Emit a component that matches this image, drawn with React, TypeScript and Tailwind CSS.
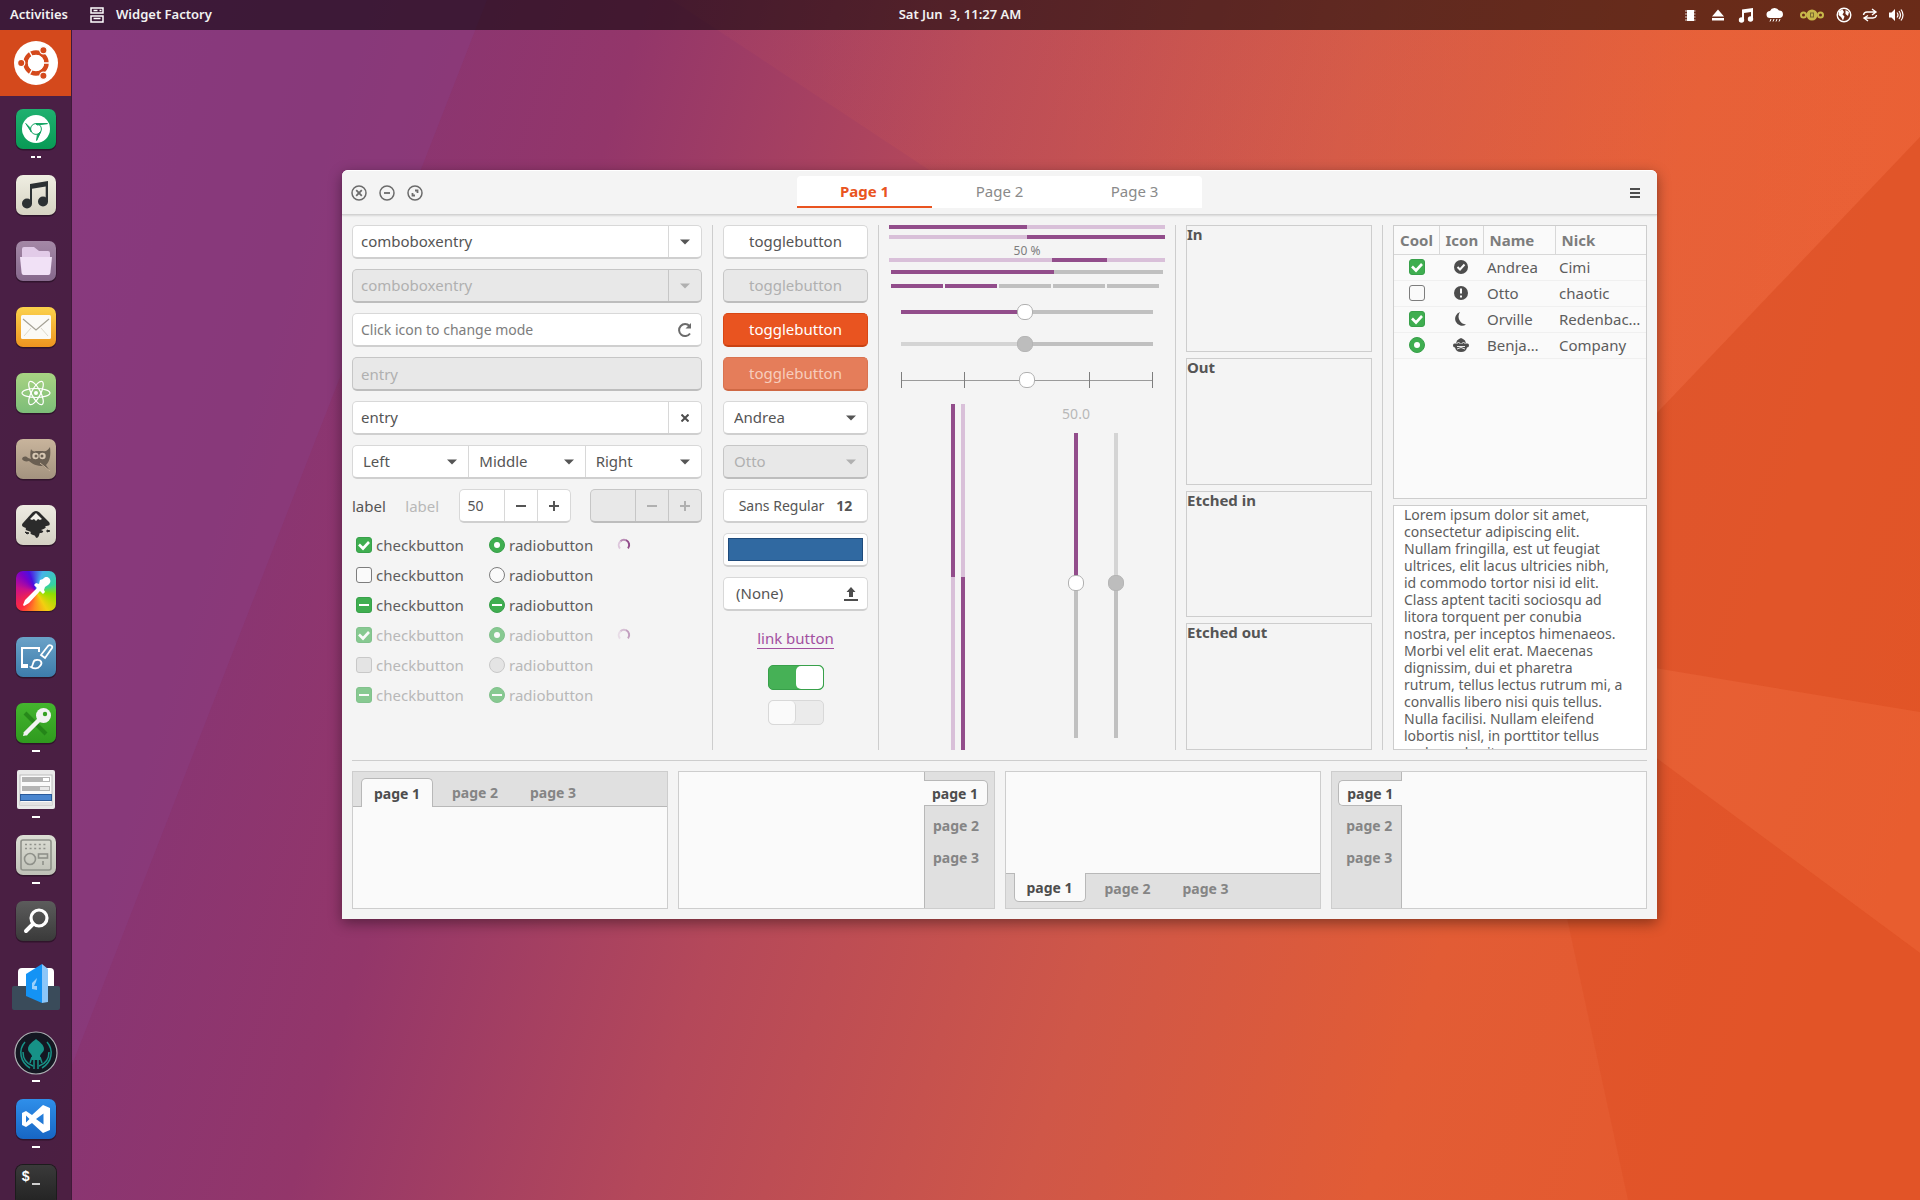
import type { ReactNode } from 'react'
import clsx from 'clsx'

interface DockItem {
  name: string
  windows: number
  icon: ReactNode
}

interface Person {
  state: 'on' | 'off' | 'radio'
  icon: ReactNode
  name: string
  nick: string
}

const Tile = ({ from, to, children }: { from: string; to: string; children: ReactNode }) => (
  <svg viewBox="0 0 40 40" className="size-10 overflow-visible">
    <defs>
      <linearGradient id={`tile-${from.slice(1)}`} x1="0" y1="0" x2="0" y2="1">
        <stop offset="0" stopColor={from} />
        <stop offset="1" stopColor={to} />
      </linearGradient>
    </defs>
    <rect x="-0.5" y="0.5" width="41" height="41" rx="7.5" fill="#000" opacity="0.35" />
    <rect width="40" height="40" rx="7" fill={`url(#tile-${from.slice(1)})`} />
    {children}
  </svg>
)

const dock: DockItem[] = [
  {
    name: 'Chromium',
    windows: 2,
    icon: (
      <Tile from="#1fb070" to="#089a55">
        <circle cx="20" cy="20" r="14" fill="#fff" />
        <circle cx="20" cy="20" r="5.4" fill="none" stroke="#12a362" strokeWidth="1" />
        <path d="M20 14.6h11.5L21 16zM15.2 22.8L9.800 14.5l4 4zM24.800 22.8L20.600 31.5l.8-6z" fill="#12a362" stroke="#12a362" />
      </Tile>
    )
  },
  {
    name: 'Music',
    windows: 0,
    icon: (
      <Tile from="#efeee2" to="#d6d3c3">
        <g fill="#2c3133">
          <circle cx="11" cy="28.5" r="5" />
          <circle cx="27" cy="26.5" r="5" />
          <path d="M14 9l18-3v21h-2.3V11.5L16 13.8V29h-2z" />
        </g>
      </Tile>
    )
  },
  {
    name: 'Files',
    windows: 0,
    icon: (
      <Tile from="#a488a6" to="#86688c">
        <path d="M6 8q0-2 2-2h10l5 4h9q2 0 2 2v6H6z" fill="#e2cbe8" />
        <path d="M4 16h32l-1.6 16q-.3 2-2 2H7.600q-1.700 0-2-2z" fill="#f1e1f6" />
      </Tile>
    )
  },
  {
    name: 'Mail',
    windows: 0,
    icon: (
      <Tile from="#fbd24c" to="#ee9420">
        <rect x="5" y="8" width="30" height="24" rx="1.500" fill="#fbfaf6" />
        <path d="M7 12l13 11L33 12" fill="none" stroke="#a5a295" strokeWidth="1.200" />
        <path d="M8 29l7-8M32 29l-7-8" stroke="#dcd9cc" strokeWidth="1" />
      </Tile>
    )
  },
  {
    name: 'Atom',
    windows: 0,
    icon: (
      <Tile from="#a8d383" to="#7cbd78">
        <g fill="none" stroke="#fff" strokeWidth="1.200">
          <ellipse cx="20" cy="20" rx="14" ry="4.500" />
          <ellipse cx="20" cy="20" rx="13" ry="4.500" transform="rotate(62 20 20)" />
          <ellipse cx="20" cy="20" rx="13" ry="4.500" transform="rotate(118 20 20)" />
        </g>
        <circle cx="20" cy="20" r="2" fill="#fff" />
      </Tile>
    )
  },
  {
    name: 'GIMP',
    windows: 0,
    icon: (
      <Tile from="#c8b49c" to="#a3937f">
        <path
          d="M15 10c1 2 3 3 5 2h7c3 1 5-1 7-4 1 8 0 14-4 18l4 6-7-5c-6 0-11-2-14-5-3 1-6 0-7-2 1-3 4-3 6-1l3 1c-1-3-1-6 0-10z"
          fill="#6a5f52"
        />
        <circle cx="19.500" cy="17" r="3.200" fill="#d8c9b4" />
        <circle cx="26.500" cy="17" r="3.200" fill="#d8c9b4" />
        <circle cx="20" cy="17" r="1.500" fill="#6a5f52" />
        <circle cx="26" cy="17" r="1.500" fill="#6a5f52" />
        <path d="M24 24l10 8" stroke="#c8b49c" strokeWidth="1" />
      </Tile>
    )
  },
  {
    name: 'Inkscape',
    windows: 0,
    icon: (
      <Tile from="#eeebe2" to="#d4d0c4">
        <path
          d="M20 6c2 0 3 1 4 2l9 9c2 3 0 4-4 4 2 1 0 3-4 4 4 1 2 3-1 3-1 0 0 3-3 5-2 0-1-3-4-3-3-1-3-2-2-3-5-2-6-2-5-4-4-1-5-3-3-5l9-10c1-1 2-2 4-2z"
          fill="#2b2b2b"
        />
        <path d="M20 8l6 6-2 1-2-1-2 2-2-2-2 1-2-1z" fill="#f3f1ea" />
        <path d="M9 27l4 1-2 1zM31 25l3 1-3 1z" fill="#2b2b2b" stroke="#2b2b2b" />
      </Tile>
    )
  },
  {
    name: 'Color Picker',
    windows: 0,
    icon: (
      <div className="grid size-10 place-items-center rounded-[7px] bg-[conic-gradient(from_20deg,#45b5e8,#35d3a0_50deg,#8ee000_80deg,#f2d010_130deg,#ff8a20_165deg,#ff2a3c_200deg,#c8108c_260deg,#7a00c8_300deg,#4a10e0_320deg,#45b5e8)] shadow-[0_1px_1px_rgba(0,0,0,0.4)]">
        <svg viewBox="0 0 40 40" className="size-10">
          <path
            d="M24 9l3-1c2-3 5-2 6-1 2 2 2 5-1 7l-3 2-1 3 1 2-2 2-3-3-11 12-5 3-1-1 2-5 12-12-3-3 2-2 3 1z"
            fill="#fff"
          />
        </svg>
      </div>
    )
  },
  {
    name: 'Krita',
    windows: 0,
    icon: (
      <Tile from="#6aa2c8" to="#3d7cab">
        <path d="M23 15v-4H6v19h6" fill="none" stroke="#fff" strokeWidth="2" />
        <path d="M5 27h7v4H5z" fill="#fff" />
        <path d="M25 18l7-9c2-2 5 0 4 2l-7 10zM15 30c3-1 1-7 5-7 5-1 7 3 4 6-2 3-6 3-9 1z" fill="none" stroke="#fff" strokeWidth="1.800" />
      </Tile>
    )
  },
  {
    name: 'Passwords',
    windows: 1,
    icon: (
      <Tile from="#44b52e" to="#2f9a1e">
        <path d="M9 10l21 21" stroke="#1e7a14" strokeWidth="4" opacity=".7" />
        <path d="M24 16L9 31" stroke="#f2f2f2" strokeWidth="4.500" />
        <circle cx="27.500" cy="12.500" r="7.500" fill="#f2f2f2" />
        <circle cx="29" cy="11" r="2.200" fill="#35a022" />
        <path d="M7 33l1-4 4 3z" fill="#f2f2f2" />
      </Tile>
    )
  },
  {
    name: 'Widget Factory',
    windows: 1,
    icon: (
      <svg viewBox="0 0 40 40" className="size-10">
        <rect x="1" y="1" width="38" height="39" rx="2" fill="#e9e9e9" />
        <rect x="4" y="6" width="32" height="30" fill="#fafafa" stroke="#bcbcbc" />
        <rect x="6" y="8" width="28" height="5" fill="#b4b4b4" />
        <rect x="27" y="9" width="6" height="3" fill="#fff" />
        <rect x="6" y="17" width="28" height="5" fill="#b4b4b4" />
        <rect x="24" y="18" width="9" height="3" fill="#e8e8e8" />
        <rect x="4.500" y="25.500" width="31" height="6" fill="#4a86cf" stroke="#2a5a9a" />
        <rect x="4" y="33" width="32" height="3" fill="#e2e2e2" />
      </svg>
    )
  },
  {
    name: 'Tweaks',
    windows: 1,
    icon: (
      <Tile from="#dcddd4" to="#bfc1b7">
        <g fill="none" stroke="#8f918a" strokeWidth="1.600">
          <rect x="5" y="5" width="30" height="30" rx="2" />
          <circle cx="14" cy="24" r="5.500" />
          <rect x="22.500" y="19" width="9" height="4" />
          <path d="M9 9.500h22M9 13.500h22" strokeDasharray="2 2.600" />
          <path d="M27 26v4" />
        </g>
      </Tile>
    )
  },
  {
    name: 'Search',
    windows: 0,
    icon: (
      <Tile from="#5c5c5c" to="#3a3a3a">
        <circle cx="23" cy="17" r="8" fill="none" stroke="#fff" strokeWidth="3.200" />
        <path d="M17 23l-7 7" stroke="#fff" strokeWidth="4" strokeLinecap="round" />
      </Tile>
    )
  },
  {
    name: 'Brackets',
    windows: 0,
    icon: (
      <svg viewBox="0 0 48 48" className="size-12">
        <rect x="6" y="5" width="36" height="22" rx="4" fill="#fff" />
        <rect y="23" width="48" height="24" rx="2" fill="#3a4b5a" />
        <path d="M14 11l16-10v39l-16-7z" fill="#1493f5" />
        <path d="M30 1l6 5v33l-6 1z" fill="#8cc6f8" />
        <path d="M25 15l-5 5v6l5 1v-4h-3l2-4z" fill="#9cd0fb" />
      </svg>
    )
  },
  {
    name: 'GitKraken',
    windows: 1,
    icon: (
      <svg viewBox="0 0 44 44" className="size-11">
        <circle cx="22" cy="22" r="21" fill="#141722" stroke="#aeb2b5" strokeWidth="1.200" />
        <path d="M22 8c4 3 8 6 8 10 0 3-3 4-4 7v4h-8v-4c-1-3-4-4-4-7 0-4 4-7 8-10z" fill="#179287" />
        <g fill="none" stroke="#179287" strokeWidth="1.500">
          <path d="M11 11C4 19 6 31 16 37M33 11c7 8 5 20-5 26M9 21c0 7 4 12 10 14M35 21c0 7-4 12-10 14" />
          <path d="M20 28v10M24 28v10M18 26l-2 6M26 26l2 6" />
        </g>
      </svg>
    )
  },
  {
    name: 'Visual Studio Code',
    windows: 1,
    icon: (
      <Tile from="#2f8fea" to="#1766c4">
        <path
          d="M27 6l7 3v22l-7 3-11-10-6 4-4-2V14l4-2 6 4zM27.500 14.500L20 20l7.500 5.500zM10 16.500v7l3.500-3.500z"
          fill="#fff"
          fillRule="evenodd"
        />
      </Tile>
    )
  },
  {
    name: 'Terminal',
    windows: 0,
    icon: (
      <div className="flex size-10 gap-0.5 rounded-[7px] bg-linear-to-b from-[#3a3a3a] to-[#222] px-1.5 pt-1 font-['Liberation_Mono',monospace] text-[14px] leading-4 font-bold text-white shadow-[0_0_0_1px_#1c1c1c]">
        $ <span className="mt-3.5 h-0.5 w-2 bg-[#cfcfcf]" />
      </div>
    )
  }
]

const iconBox = 'size-4 fill-[#4d4d4d]'

const people: Person[] = [
  {
    state: 'on',
    name: 'Andrea',
    nick: 'Cimi',
    icon: (
      <svg viewBox="0 0 16 16" className={iconBox}>
        <circle cx="8" cy="8" r="7" />
        <path d="M4.500 8l2.500 2.500L11.500 5.500" fill="none" stroke="#fafafa" strokeWidth="2" />
      </svg>
    )
  },
  {
    state: 'off',
    name: 'Otto',
    nick: 'chaotic',
    icon: (
      <svg viewBox="0 0 16 16" className={iconBox}>
        <circle cx="8" cy="8" r="7" />
        <path d="M8 3.500v5M8 10.500v2" stroke="#fafafa" strokeWidth="2" />
      </svg>
    )
  },
  {
    state: 'on',
    name: 'Orville',
    nick: 'Redenbac…',
    icon: (
      <svg viewBox="0 0 16 16" className={iconBox}>
        <path d="M7 1a7 7 0 1 0 6 12.500A8 8 0 0 1 7 1z" />
      </svg>
    )
  },
  {
    state: 'radio',
    name: 'Benja…',
    nick: 'Company',
    icon: (
      <svg viewBox="0 0 16 16" className={iconBox}>
        <path d="M6 2l2-1 2 1 2 1.500 1 3h1.500q1.500 0 1.500 2t-2 2q-1 4.500-6 4.500t-6-4.500q-2 0-2-2t1.500-2H3l1-3z" />
        <path d="M3.500 6.500q2-2 4 0M8.500 6.500q2-2 4 0M4 12q4-3 8 0M4 9.500h8" fill="none" stroke="#fafafa" strokeWidth=".9" />
      </svg>
    )
  }
]

const lorem = `Lorem ipsum dolor sit amet,
consectetur adipiscing elit.
Nullam fringilla, est ut feugiat
ultrices, elit lacus ultricies nibh,
id commodo tortor nisi id elit.
Class aptent taciti sociosqu ad
litora torquent per conubia
nostra, per inceptos himenaeos.
Morbi vel elit erat. Maecenas
dignissim, dui et pharetra
rutrum, tellus lectus rutrum mi, a
convallis libero nisi quis tellus.
Nulla facilisi. Nullam eleifend
lobortis nisl, in porttitor tellus
malesuada vitae.`

const box = 'h-[34px] rounded-[5px] border border-b-2'
const boxOn = 'border-[#d8d8d8] border-b-[#cfcfcf] bg-white text-[#555]'
const boxOff = 'border-[#c6c6c6] border-b-[#bdbdbd] bg-[#e8e8e8] text-[#b0b0b0]'

const Caret = ({ className = '' }: { className?: string }) => (
  <svg viewBox="0 0 10 6" className={clsx('h-1.5 w-2.5 fill-current', className)}>
    <path d="M0 .5h10L5 5.500z" />
  </svg>
)

const Wallpaper = () => (
  <svg viewBox="0 0 1920 1200" preserveAspectRatio="none" className="absolute inset-0 size-full">
    <defs>
      <linearGradient id="wall" gradientUnits="userSpaceOnUse" x1="0" y1="0" x2="1980" y2="594">
        <stop offset="0" stopColor="#87387d" />
        <stop offset="0.16" stopColor="#873574" />
        <stop offset="0.3" stopColor="#93366a" />
        <stop offset="0.46" stopColor="#b4485a" />
        <stop offset="0.64" stopColor="#cf5748" />
        <stop offset="0.8" stopColor="#e25c35" />
        <stop offset="1" stopColor="#e6592b" />
      </linearGradient>
      <linearGradient id="glow" x1="0" y1="0" x2="1" y2="0">
        <stop offset="0" stopColor="#ff7648" stopOpacity="0.04" />
        <stop offset="1" stopColor="#ff7648" stopOpacity="0.22" />
      </linearGradient>
    </defs>
    <rect width="1920" height="1200" fill="url(#wall)" />
    <path d="M0 0h487L72 1065v135H0z" fill="#8a3f82" opacity=".45" />
    <path d="M672 0h1248v137L1655 415H1300z" fill="url(#glow)" />
    <path d="M1920 137v575l-265-44V415z" fill="#dc4e20" opacity=".4" />
    <path d="M1655 668l265 44v241l-265-196z" fill="#ee6c3c" opacity=".25" />
    <path d="M1655 757l265 196v247h-292l-61-282z" fill="#d94a1e" opacity=".3" />
  </svg>
)

const TopBar = () => (
  <header className="relative grid h-[30px] grid-cols-[1fr_auto_1fr] items-center bg-black/55 px-2.5 text-[13px] font-semibold text-[#f2f2f2]">
    <div className="flex items-center">
      <button>Activities</button>
      <svg viewBox="0 0 14 16" className="mr-3 ml-[22px] h-4 w-3.5 fill-none stroke-white stroke-[1.500]">
        <path d="M1 1h12v5H1zM1 9h12v6H1zM3.500 3.500h4M9.500 3.500h2M3.500 11.500h7" />
      </svg>
      <button>Widget Factory</button>
    </div>
    <time className="whitespace-pre">Sat Jun  3, 11:27 AM</time>
    <div className="flex items-center justify-end gap-3 pr-1.5">
      <svg viewBox="0 0 16 16" className="size-4 fill-white">
        <path d="M5 3h7v11H5z" />
        <path d="M3 4h2M3 7h2M3 10h2M3 13h2M12 4h1.500M12 7h1.500M12 10h1.500M12 13h1.500" stroke="#fff" strokeWidth=".8" />
      </svg>
      <svg viewBox="0 0 16 16" className="size-4 fill-white">
        <path d="M8 2.500l6 7H2zM2 11h12v2.500H2z" />
      </svg>
      <svg viewBox="0 0 16 16" className="size-4 fill-white">
        <path d="M4 2.500L15 1v11h-2V5L6 6v7H4z" />
        <circle cx="3.500" cy="13" r="2.700" />
        <circle cx="12.500" cy="12" r="2.700" />
      </svg>
      <svg viewBox="0 0 18 16" className="h-4 w-[18px] fill-white">
        <path d="M4 11a3.500 3.500 0 0 1 0-7 5 5 0 0 1 9-.5A3.800 3.800 0 0 1 14 11z" />
        <path d="M5 12l-1 2.500M8 12l-1 2.500M11 12l-1 2.500M14 12l-1 2.500" stroke="#fff" />
      </svg>
      <svg viewBox="0 0 24 16" className="ml-1 h-4 w-6 fill-none stroke-[#c8b84a] stroke-2">
        <circle cx="3.500" cy="8" r="2.500" />
        <circle cx="12" cy="8" r="4.500" fill="#c8b84a" />
        <circle cx="20.500" cy="8" r="2.500" />
        <rect x="10.500" y="6" width="3" height="4" stroke="#7a6a30" strokeWidth="1" />
      </svg>
      <div className="flex gap-2.5">
        <svg viewBox="0 0 16 16" className="size-4 fill-white">
          <circle cx="8" cy="8" r="6.800" fill="none" stroke="#fff" strokeWidth="1.400" />
          <path d="M3 4l3.500-1.500L8 5 6.500 7.500l2 2L7 13.500 5 10 2.500 8zM9.500 3l3.500 2-1 4-2.500-2z" />
        </svg>
        <svg viewBox="0 0 16 16" className="size-4 fill-none stroke-white stroke-[1.400]">
          <path d="M1.500 8Q2 5 5 5h8M10 2l4 3-4 3M14.500 8q-.5 3-3.500 3H3M6 8.500L2 11l4 3" />
        </svg>
        <svg viewBox="0 0 16 16" className="size-4 fill-white">
          <path d="M1 5.500h2.500L7 2v12l-3.500-3.500H1z" />
          <path d="M9 5.500q2 2.500 0 5M11 4q3 4 0 8M13 2.500q4 5.500 0 11" fill="none" stroke="#fff" strokeWidth="1.200" />
        </svg>
      </div>
    </div>
  </header>
)

const Dock = () => (
  <nav aria-label="Dock" className="relative flex w-[72px] shrink-0 flex-col overflow-hidden border-r border-black/15 bg-black/45">
    <button aria-label="Show Applications" className="grid h-[66px] w-[72px] shrink-0 place-items-center bg-[#d4491c]">
      <svg viewBox="0 0 44 44" className="size-11">
        <circle cx="22" cy="22" r="22" fill="#fff" />
        <circle cx="22" cy="22" r="10.500" fill="none" stroke="#d4491c" strokeWidth="4.500" />
        <path d="M22 22h15M22 22L14.500 9M22 22l-7.500 13" stroke="#fff" strokeWidth="1.500" />
        <circle cx="22" cy="22" r="8" fill="#fff" />
        <g fill="#d4491c" stroke="#fff" strokeWidth="1.200">
          <circle cx="7.200" cy="22" r="3.600" />
          <circle cx="29.400" cy="9.200" r="3.600" />
          <circle cx="29.400" cy="34.800" r="3.600" />
        </g>
      </svg>
    </button>
    {dock.map((item) => (
      <button key={item.name} aria-label={item.name} className="relative grid h-[66px] shrink-0 place-items-center">
        {item.icon}
        <span className="absolute inset-x-0 bottom-1 flex justify-center gap-0.5">
          {item.windows === 1 && <i className="h-0.5 w-2 bg-white" />}
          {item.windows === 2 && (
            <>
              <i className="h-0.5 w-1 bg-white" />
              <i className="h-0.5 w-1 bg-white" />
            </>
          )}
        </span>
      </button>
    ))}
  </nav>
)

const TitleBar = () => (
  <div className="flex h-[45px] items-center justify-between rounded-t-md border-t border-b border-t-white border-b-[#d2d2d2] bg-[#f4f4f4] px-2 shadow-[0_1px_2px_rgba(0,0,0,0.12)]">
    <div className="flex w-24 items-center gap-2.5">
      {[
        { label: 'Close', d: 'M6.200 6.200l5.600 5.600M11.800 6.200l-5.600 5.600' },
        { label: 'Minimize', d: 'M6 9h6' },
        { label: 'Maximize', d: 'M9 6.500h2.500V9M9 11.500H6.500V9' }
      ].map((b) => (
        <button key={b.label} aria-label={b.label}>
          <svg viewBox="0 0 18 18" className="size-[18px] fill-none stroke-[#6b6b6b] stroke-[1.800]">
            <circle cx="9" cy="9" r="7" strokeWidth="1.500" />
            <path d={b.d} />
          </svg>
        </button>
      ))}
    </div>
    <div role="tablist" className="mb-1.5 flex w-[405px] self-end rounded-t bg-white text-[15px]">
      <button role="tab" aria-selected className="h-8 flex-1 border-b-2 border-[#e95420] font-bold text-[#e95420]">
        Page 1
      </button>
      <button role="tab" className="h-8 flex-1 border-b-2 border-transparent text-[#8a8a8a]">
        Page 2
      </button>
      <button role="tab" className="h-8 flex-1 border-b-2 border-transparent text-[#8a8a8a]">
        Page 3
      </button>
    </div>
    <div className="flex w-24 justify-end pr-2">
      <button aria-label="Menu">
        <svg viewBox="0 0 12 12" className="size-3 stroke-[#4d4d4d] stroke-2">
          <path d="M1 2h10M1 6h10M1 10h10" />
        </svg>
      </button>
    </div>
  </div>
)

const ComboEntry = ({ disabled }: { disabled?: boolean }) => (
  <div className={clsx(box, disabled ? boxOff : boxOn, 'flex')}>
    <input aria-label="comboboxentry" defaultValue="comboboxentry" disabled={disabled} className="min-w-0 flex-1 px-2" />
    <button
      aria-label="Open list"
      disabled={disabled}
      className={clsx('grid w-[33px] place-items-center border-l', disabled ? 'border-[#c6c6c6]' : 'border-[#d8d8d8]')}
    >
      <Caret />
    </button>
  </div>
)

interface DropProps {
  label: string
  options: string[]
  disabled?: boolean
}

const Drop = ({ label, options, disabled }: DropProps) => (
  <div className="relative flex min-w-0 flex-1 items-center">
    <select aria-label={label} disabled={disabled} className="size-full appearance-none px-2.5">
      {options.map((o) => (
        <option key={o}>{o}</option>
      ))}
    </select>
    <Caret className="pointer-events-none absolute right-[11px]" />
  </div>
)

const Spin = ({ value, disabled }: { value: string; disabled?: boolean }) => {
  const line = disabled ? 'border-[#c6c6c6]' : 'border-[#d8d8d8]'
  return (
    <div className={clsx(box, disabled ? boxOff : boxOn, 'flex w-28')}>
      <input aria-label="Value" defaultValue={value} disabled={disabled} className="min-w-0 flex-1 px-2 text-[14px]" />
      <button aria-label="Decrease" disabled={disabled} className={clsx('grid w-[33px] place-items-center border-l', line)}>
        <svg viewBox="0 0 10 10" className="size-2.5 stroke-current stroke-2">
          <path d="M0 5h10" />
        </svg>
      </button>
      <button aria-label="Increase" disabled={disabled} className={clsx('grid w-[33px] place-items-center border-l', line)}>
        <svg viewBox="0 0 10 10" className="size-2.5 stroke-current stroke-2">
          <path d="M0 5h10M5 0v10" />
        </svg>
      </button>
    </div>
  )
}

interface MarkProps {
  type: 'checkbox' | 'radio'
  mark: 'on' | 'off' | 'mixed'
  disabled?: boolean
  label?: string
}

const Mark = ({ type, mark, disabled, label }: MarkProps) => (
  <span className={clsx('relative block size-4', disabled && mark !== 'off' && 'opacity-60')}>
    <input
      type={type}
      aria-label={label}
      defaultChecked={mark === 'on'}
      disabled={disabled}
      className={clsx(
        'block size-4 appearance-none border',
        type === 'radio' ? 'rounded-full' : 'rounded-[3px]',
        mark !== 'off' && 'border-[#38a04a] bg-[#3fae50]',
        mark === 'off' && !disabled && 'border-[#7d7d7d] bg-[#fafafa]',
        mark === 'off' && disabled && 'border-[#c8c8c8] bg-[#e4e4e4]'
      )}
    />
    <svg viewBox="0 0 16 16" className="pointer-events-none absolute inset-0 size-4 fill-none stroke-white">
      {mark === 'on' && type === 'checkbox' && <path d="M3 7.500l4 4L13 5" strokeWidth="2.600" />}
      {mark === 'on' && type === 'radio' && <circle cx="8" cy="8" r="3" fill="#fff" stroke="none" />}
      {mark === 'mixed' && <path d="M3 8h10" strokeWidth="2" />}
    </svg>
  </span>
)

const Choice = (props: MarkProps) => (
  <label className={clsx('flex items-center gap-1 leading-5', props.disabled ? 'text-[#b8b8b8]' : 'text-[#5d5d5d]')}>
    <Mark {...props} />
    {props.type === 'radio' ? 'radiobutton' : 'checkbutton'}
  </label>
)

const Spinner = ({ disabled }: { disabled?: boolean }) => (
  <svg viewBox="0 0 14 14" className={clsx('ml-0.5 size-3.5 fill-none stroke-2', disabled && 'opacity-50')}>
    <path d="M3 10.500A5.200 5.200 0 0 1 3.500 3.200" stroke="#ddc6dc" />
    <path d="M3.500 3.200A5.200 5.200 0 0 1 9 2.200" stroke="#b98bb5" />
    <path d="M9 2.200A5.200 5.200 0 0 1 11 10.300" stroke="#924d8b" />
  </svg>
)

const Entries = () => (
  <section className="flex w-[350px] flex-col gap-2.5">
    <ComboEntry />
    <ComboEntry disabled />
    <div className={clsx(box, boxOn, 'flex')}>
      <input
        aria-label="Mode"
        placeholder="Click icon to change mode"
        className="min-w-0 flex-1 px-2 text-[14px] placeholder:text-[#7d7d7d]"
      />
      <button aria-label="Change mode" className="grid w-8 place-items-center">
        <svg viewBox="0 0 16 16" className="size-4 fill-none stroke-[#6b6b6b] stroke-2">
          <path d="M13 11.500A6 6 0 1 1 12.500 4" />
          <path d="M14 1v5.500H8.500z" fill="#6b6b6b" stroke="none" />
        </svg>
      </button>
    </div>
    <input aria-label="Disabled entry" defaultValue="entry" disabled className={clsx(box, boxOff, 'px-2')} />
    <div className={clsx(box, boxOn, 'flex')}>
      <input aria-label="Entry" defaultValue="entry" className="min-w-0 flex-1 px-2" />
      <button aria-label="Clear" className="grid w-[33px] place-items-center border-l border-[#d8d8d8]">
        <svg viewBox="0 0 8 8" className="size-2 stroke-[#4d4d4d] stroke-2">
          <path d="M.5.5l7 7M7.500.5l-7 7" />
        </svg>
      </button>
    </div>
    <div className={clsx(box, boxOn, 'flex divide-x divide-[#d8d8d8]')}>
      <Drop label="Left" options={['Left']} />
      <Drop label="Middle" options={['Middle']} />
      <Drop label="Right" options={['Right']} />
    </div>
    <div className="flex items-center justify-between">
      <span>label</span>
      <span className="text-[#b8b8b8]">label</span>
      <Spin value="50" />
      <Spin value="" disabled />
    </div>
    <div className="grid auto-rows-[24px] grid-cols-[133px_126px_1fr] items-center gap-y-1.5 pl-1">
      <Choice type="checkbox" mark="on" />
      <Choice type="radio" mark="on" />
      <Spinner />
      <Choice type="checkbox" mark="off" />
      <Choice type="radio" mark="off" />
      <span />
      <Choice type="checkbox" mark="mixed" />
      <Choice type="radio" mark="mixed" />
      <span />
      <Choice type="checkbox" mark="on" disabled />
      <Choice type="radio" mark="on" disabled />
      <Spinner disabled />
      <Choice type="checkbox" mark="off" disabled />
      <Choice type="radio" mark="off" disabled />
      <span />
      <Choice type="checkbox" mark="mixed" disabled />
      <Choice type="radio" mark="mixed" disabled />
    </div>
  </section>
)

const Buttons = () => (
  <section className="flex w-[145px] flex-col gap-2.5">
    <button className={clsx(box, boxOn)}>togglebutton</button>
    <button disabled className={clsx(box, boxOff)}>
      togglebutton
    </button>
    <button aria-pressed className={clsx(box, 'border-[#d84714] border-b-[#c94213] bg-[#e95420] text-white')}>
      togglebutton
    </button>
    <button aria-pressed disabled className={clsx(box, 'border-[#d97350] border-b-[#cf6844] bg-[#e57d5a] text-[#f7cdbd]')}>
      togglebutton
    </button>
    <div className={clsx(box, boxOn, 'flex')}>
      <Drop label="Name" options={['Andrea', 'Otto']} />
    </div>
    <div className={clsx(box, boxOff, 'flex')}>
      <Drop label="Disabled name" options={['Otto']} disabled />
    </div>
    <button className={clsx(box, boxOn, 'flex items-center justify-center gap-3 text-[14px]')}>
      Sans Regular <b>12</b>
    </button>
    <button aria-label="Pick a color" className={clsx(box, boxOn, 'p-1')}>
      <span className="block h-full border border-[#1f4b7c] bg-[#3069a1]" />
    </button>
    <button className={clsx(box, boxOn, 'flex items-center justify-between pr-2 pl-3')}>
      (None)
      <svg viewBox="0 0 16 16" className="size-4 fill-[#4d4d4d]">
        <path d="M8 1l4.500 5H10v5H6V6H3.500zM1 13h14v2H1z" />
      </svg>
    </button>
    <div className="grid h-[34px] place-items-center">
      <a href="#link" className="border-b border-[#a24fa0] leading-5 text-[#a24fa0]">
        link button
      </a>
    </div>
    <button
      role="switch"
      aria-checked
      aria-label="Switch"
      className="flex h-[25px] w-14 justify-end self-center rounded-[5px] border border-[#38a04a] bg-[#46b156]"
    >
      <span className="h-full w-[27px] rounded-[5px] bg-white" />
    </button>
    <button
      role="switch"
      disabled
      aria-label="Disabled switch"
      className="flex h-[25px] w-14 self-center rounded-[5px] border border-[#d8d8d8] bg-[#ebebeb]"
    >
      <span className="h-full w-[27px] rounded-[5px] border-r border-[#d8d8d8] bg-[#fafafa]" />
    </button>
  </section>
)

interface BarProps {
  start: number
  size: number
  vertical?: boolean
  track?: string
  className?: string
}

const Bar = ({ start, size, vertical, track = 'bg-[#d9c0d9]', className }: BarProps) => (
  <div
    role="progressbar"
    aria-valuenow={size}
    className={clsx('flex', track, vertical ? 'w-1 flex-col' : 'h-1', className)}
  >
    <i style={vertical ? { height: `${start}%` } : { width: `${start}%` }} />
    <i className="bg-[#924d8b]" style={vertical ? { height: `${size}%` } : { width: `${size}%` }} />
  </div>
)

const range =
  'block appearance-none bg-center bg-no-repeat [&::-webkit-slider-thumb]:size-4 [&::-webkit-slider-thumb]:appearance-none [&::-webkit-slider-thumb]:rounded-[7px] [&::-webkit-slider-thumb]:border'
const thumbOn = '[&::-webkit-slider-thumb]:border-[#b0b0b0] [&::-webkit-slider-thumb]:bg-white'
const thumbOff = '[&::-webkit-slider-thumb]:border-[#b5b5b5] [&::-webkit-slider-thumb]:bg-[#bdbdbd]'
const horizontal = 'h-4 w-full bg-[length:100%_4px]'
const upright = 'w-4 flex-1 bg-[length:4px_100%] [writing-mode:vertical-lr]'

const Sliders = () => (
  <section className="flex min-w-0 flex-1 flex-col">
    <Bar start={0} size={50} />
    <Bar start={50} size={50} className="mt-1.5" />
    <span className="h-[19px] pt-0.5 text-center text-[12px] leading-5 text-[#7d7d7d]">50 %</span>
    <Bar start={59} size={20} />
    <Bar start={0} size={60} track="bg-[#c0c0c0]" className="mx-0.5 mt-2" />
    <div role="meter" aria-valuenow={2} className="mt-2.5 mr-1.5 ml-0.5 flex h-1 gap-0.5">
      {[1, 2, 3, 4, 5].map((n) => (
        <i key={n} className={clsx('flex-1', n < 3 ? 'bg-[#924d8b]' : 'bg-[#c0c0c0]')} />
      ))}
    </div>
    <div className="mt-4 flex flex-col px-3">
      <input
        type="range"
        aria-label="Level"
        defaultValue={49}
        className={clsx(range, thumbOn, horizontal, 'bg-[linear-gradient(to_right,#924d8b_49%,#c0c0c0_49%)]')}
      />
      <input
        type="range"
        aria-label="Disabled level"
        defaultValue={49}
        disabled
        className={clsx(range, thumbOff, horizontal, 'mt-4 bg-[linear-gradient(to_right,#d4d4d4_49%,#c0c0c0_49%)]')}
      />
      <div className="relative mt-5 h-4 bg-[linear-gradient(#9a9a9a,#9a9a9a)] bg-[length:100%_1px] bg-center bg-no-repeat">
        <div className="flex h-full justify-between">
          {[0, 25, 50, 75, 100].map((n) => (
            <i key={n} className="w-px bg-[#7d7d7d]" />
          ))}
        </div>
        <input type="range" aria-label="Marked level" defaultValue={50} className={clsx(range, thumbOn, 'absolute inset-0 h-4 w-full')} />
      </div>
    </div>
    <div className="mt-4 grid min-h-[346px] flex-1 grid-cols-2">
      <div className="flex justify-center gap-1.5">
        <Bar vertical start={0} size={50} />
        <Bar vertical start={50} size={50} />
      </div>
      <div className="flex justify-center pb-3">
        <div className="flex w-10 flex-col items-center">
          <span className="mb-2 h-[21px] text-[14px] leading-5 text-[#b8b8b8]">50.0</span>
          <input
            type="range"
            aria-label="Vertical level"
            defaultValue={49}
            className={clsx(range, thumbOn, upright, 'bg-[linear-gradient(to_bottom,#924d8b_49%,#c0c0c0_49%)]')}
          />
        </div>
        <div className="flex w-10 flex-col items-center pt-[29px]">
          <input
            type="range"
            aria-label="Disabled vertical level"
            defaultValue={49}
            disabled
            className={clsx(range, thumbOff, upright, 'bg-[linear-gradient(to_bottom,#d4d4d4_49%,#c0c0c0_49%)]')}
          />
        </div>
      </div>
    </div>
  </section>
)

const Frames = () => (
  <section className="flex w-[186px] flex-col gap-1.5">
    {['In', 'Out', 'Etched in', 'Etched out'].map((name) => (
      <div key={name} className="flex-1 border border-[#cdcdcd] leading-4 font-bold">
        {name}
      </div>
    ))}
  </section>
)

const Lists = () => (
  <section className="flex w-[254px] flex-col gap-1.5">
    <div className="h-[274px] border border-[#cdcdcd] bg-[#fafafa]">
      <table className="w-full table-fixed text-left">
        <thead>
          <tr className="h-7 border-b border-[#d8d8d8] text-[#7d7d7d] [&>th]:border-[#d8d8d8] [&>th]:px-1.5 [&>th+th]:border-l">
            <th className="w-[45px]">Cool</th>
            <th className="w-[44px]">Icon</th>
            <th className="w-[72px]">Name</th>
            <th>Nick</th>
          </tr>
        </thead>
        <tbody>
          {people.map((p) => (
            <tr key={p.name} className="h-[26px] border-b border-[#f0f0f0] text-[#5d5d5d] [&>td]:px-1">
              <td>
                <div className="flex justify-center">
                  <Mark
                    type={p.state === 'radio' ? 'radio' : 'checkbox'}
                    mark={p.state === 'off' ? 'off' : 'on'}
                    label={`${p.name} is cool`}
                  />
                </div>
              </td>
              <td>
                <div className="flex justify-center">{p.icon}</div>
              </td>
              <td>{p.name}</td>
              <td>{p.nick}</td>
            </tr>
          ))}
        </tbody>
      </table>
    </div>
    <textarea
      aria-label="Text"
      defaultValue={lorem}
      className="min-h-0 flex-1 resize-none overflow-hidden border border-[#cdcdcd] bg-white pr-2 pl-2.5 text-[14px] leading-[17px] text-[#5d5d5d]"
    />
  </section>
)

type Side = 'top' | 'right' | 'bottom' | 'left'

const notebook = { top: 'flex-col', right: 'flex-row-reverse', bottom: 'flex-col-reverse', left: 'flex-row' }
const strip = {
  top: 'h-[35px] flex-row items-end border-b pl-2',
  right: 'w-[70px] flex-col border-l pr-1.5 pt-2',
  bottom: 'h-[35px] flex-row items-start border-t pl-2',
  left: 'w-[70px] flex-col border-r pl-1.5 pt-2'
}
const tab = {
  top: 'h-7 w-[72px]',
  right: 'h-[26px]',
  bottom: 'h-7 w-[72px]',
  left: 'h-[26px]'
}
const current = {
  top: '-mb-px h-[29px] rounded-t-[5px] border border-b-0',
  right: '-ml-px rounded-r-[5px] border border-l-0',
  bottom: '-mt-px h-[29px] rounded-b-[5px] border border-t-0',
  left: '-mr-px rounded-l-[5px] border border-r-0'
}

const Notebook = ({ side }: { side: Side }) => (
  <div className={clsx('flex h-[138px] border border-[#cdcdcd] bg-[#fafafa]', notebook[side])}>
    <div role="tablist" className={clsx('flex shrink-0 gap-1.5 border-[#b8b8b8] bg-[#e0e0e0]', strip[side])}>
      {['page 1', 'page 2', 'page 3'].map((name, i) => (
        <button
          key={name}
          role="tab"
          aria-selected={i === 0}
          className={clsx(
            'text-[14px] font-bold',
            tab[side],
            i === 0 ? ['border-[#b8b8b8] bg-[#fafafa] text-[#4d4d4d]', current[side]] : 'text-[#858585]'
          )}
        >
          {name}
        </button>
      ))}
    </div>
    <div role="tabpanel" className="flex-1" />
  </div>
)

const Rule = () => <div className="w-px bg-[#cdcdcd]" />

const Window = () => (
  <main className="absolute top-[140px] right-[263px] left-[270px] rounded-t-md bg-[#f4f4f4] text-[15px] text-[#555] shadow-[0_4px_14px_rgba(0,0,0,0.4)]">
    <TitleBar />
    <div className="flex flex-col gap-2.5 p-2.5">
      <div className="flex gap-2.5">
        <Entries />
        <Rule />
        <Buttons />
        <Rule />
        <Sliders />
        <Rule />
        <Frames />
        <Rule />
        <Lists />
      </div>
      <div className="h-px bg-[#cdcdcd]" />
      <div className="grid grid-cols-4 gap-2.5">
        <Notebook side="top" />
        <Notebook side="right" />
        <Notebook side="bottom" />
        <Notebook side="left" />
      </div>
    </div>
  </main>
)

const App = () => (
  <div className="relative flex h-screen flex-col overflow-hidden font-['Noto_Sans',sans-serif]">
    <Wallpaper />
    <TopBar />
    <div className="flex min-h-0 flex-1">
      <Dock />
      <div className="relative flex-1">
        <Window />
      </div>
    </div>
  </div>
)

export default App
